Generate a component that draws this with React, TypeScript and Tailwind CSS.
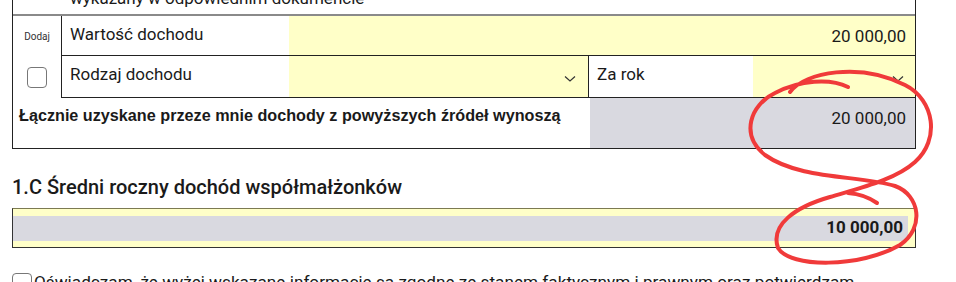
import React from 'react';

const Chevron: React.FC = () => (
  <svg width="12" height="8" viewBox="0 0 12 8" className="shrink-0">
    <path d="M1 1.5 L6 6 L11 1.5" fill="none" stroke="#333" strokeWidth="1.2" />
  </svg>
);

const App: React.FC = () => {
  return (
    <div className="relative w-[956px] h-[282px] overflow-hidden bg-white font-['Roboto',sans-serif] text-[#1a1a1a]">
      <div className="pl-3 pr-10">
        {/* Income table */}
        <div className="border-x border-b border-[#222] -mt-[24px]">
          <div className="h-[40px] flex items-end pl-[57px] pb-[6px] border-b-2 border-[#8a8a8a]">
            <span className="text-[17px] leading-5">wykazany w odpowiednim dokumencie</span>
          </div>

          <div className="flex">
            <div className="w-[49px] flex flex-col border-r border-[#222]">
              <div className="h-[40px] flex items-center justify-center text-[10px] text-[#333]">Dodaj</div>
              <div className="h-[42px] flex items-center justify-center">
                <div className="w-[20px] h-[21px] rounded-[4px] border border-[#777] bg-white" />
              </div>
            </div>
            <div className="flex-1 flex flex-col">
              <div className="h-[40px] flex border-b border-[#222]">
                <div className="w-[227px] pl-2 pt-[6px] text-[17px]">Wartość dochodu</div>
                <div className="flex-1 bg-[#ffffc8] flex items-center justify-end pr-[9px] pt-[2px] text-[17px]">20 000,00</div>
              </div>
              <div className="h-[42px] flex border-b border-[#222]">
                <div className="w-[227px] pl-2 pt-[6px] text-[17px]">Rodzaj dochodu</div>
                <div className="w-[300px] bg-[#ffffc8] flex items-center justify-end pr-[12px] pt-[4px] border-r border-[#222]">
                  <Chevron />
                </div>
                <div className="w-[164px] pl-2 pt-[6px] text-[17px]">Za rok</div>
                <div className="flex-1 bg-[#ffffc8] flex items-center justify-end pr-[11px] pt-[4px]">
                  <Chevron />
                </div>
              </div>
            </div>
          </div>

          <div className="h-[50px] flex">
            <div className="w-[577px] pl-[6px] pt-[7px] text-[16.2px] font-bold leading-5 font-['Liberation_Sans',sans-serif] whitespace-nowrap">
              Łącznie uzyskane przeze mnie dochody z powyższych źródeł wynoszą
            </div>
            <div className="flex-1 bg-[#d9d9e0] flex justify-end pr-[9px] pt-[8px] text-[17px]">20 000,00</div>
          </div>
        </div>

        {/* Section 1.C */}
        <h2 className="mt-[26px] text-[20px] font-medium leading-6">1.C Średni roczny dochód współmałżonków</h2>
        <div className="mt-[9px] h-[40px] border border-[#333] border-t-[#7c7a52] bg-[#ffffc8] flex items-center pr-[7px]">
          <div className="w-full h-[25px] bg-[#d9d9e0] flex items-center justify-end pr-[5px] text-[17px] font-bold">10 000,00</div>
        </div>

        <div className="mt-[22px] flex items-start gap-[2px]">
          <div className="mt-[3px] w-[20px] h-[20px] rounded-[4px] border border-[#777] shrink-0" />
          <p className="text-[17.2px] leading-6 whitespace-nowrap">
            Oświadczam, że wyżej wskazane informacje są zgodne ze stanem faktycznym i prawnym oraz potwierdzam
          </p>
        </div>
      </div>

      {/* red pen annotation */}
      <svg className="absolute inset-0 pointer-events-none" width="956" height="282" viewBox="0 0 956 282">
        <path
          d="M 790 92 C 805 72, 860 62, 905 85 C 935 100, 940 140, 915 162 C 895 180, 860 188, 830 197 C 795 207, 770 225, 778 248 C 790 268, 860 268, 900 245 C 925 228, 920 195, 895 186 C 860 175, 800 180, 765 155 C 740 135, 750 105, 775 93 C 800 80, 830 78, 848 87"
          fill="none"
          stroke="#f03a3a"
          strokeWidth="4"
          strokeLinecap="round"
        />
        <path d="M 848 193 C 860 194, 870 198, 877 203" fill="none" stroke="#f03a3a" strokeWidth="4" strokeLinecap="round" />
      </svg>
    </div>
  );
};

export default App;
